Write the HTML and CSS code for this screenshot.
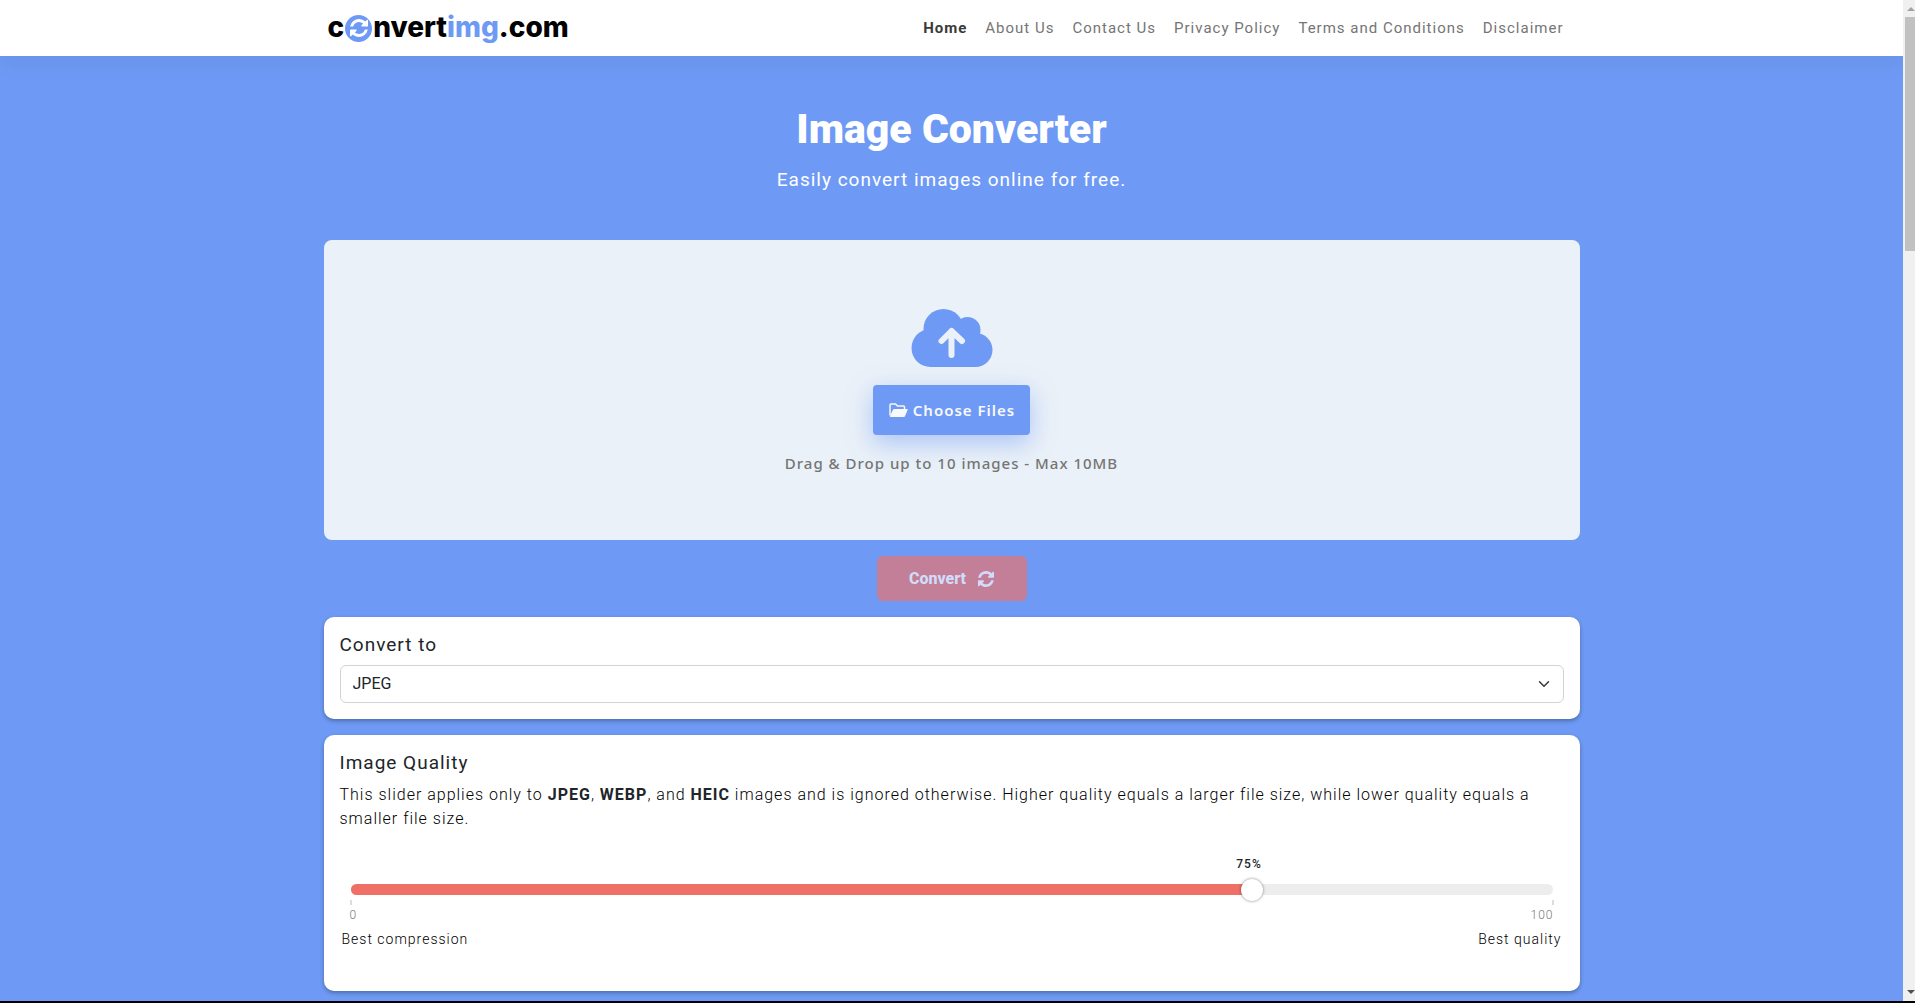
FILE: index.html
```html
<!DOCTYPE html>
<html lang="en">
<head>
  <meta charset="UTF-8">
  <meta name="viewport" content="width=device-width, initial-scale=1">
  <title>Image Converter - convertimg.com</title>
  <link rel="stylesheet" href="styles.css">
</head>
<body>
  <svg class="sprite" aria-hidden="true">
    <symbol id="refresh" viewBox="0 128 1536 1536">
      <path d="M1511 1056q0 5-1 7-64 268-268 434.500t-478 166.500q-146 0-282.500-55t-243.500-157l-129 129q-19 19-45 19t-45-19-19-45v-448q0-26 19-45t45-19h448q26 0 45 19t19 45-19 45l-137 137q71 66 161 102t187 36q134 0 250-65t186-179q11-17 53-117 8-23 30-23h192q13 0 22.500 9.500t9.500 22.500zm25-800v448q0 26-19 45t-45 19h-448q-26 0-45-19t-19-45 19-45l138-138q-148-137-349-137-134 0-250 65t-186 179q-11 17-53 117-8 23-30 23h-199q-13 0-22.500-9.500t-9.500-22.500v-7q65-268 270-434.500t480-166.500q146 0 284 55.500t245 156.500l130-129q19-19 45-19t45 19 19 45z"/>
    </symbol>
  </svg>

  <div class="page">
    <header class="header">
      <div class="container header-inner">
        <a class="logo" href="#" aria-label="convertimg.com">
          <span>c</span>
          <span class="logo-o"><svg><use href="#refresh"/></svg></span>
          <span>nvert<span class="logo-blue">img</span>.com</span>
        </a>
        <nav class="nav">
          <a class="active" href="#">Home</a>
          <a href="#">About Us</a>
          <a href="#">Contact Us</a>
          <a href="#">Privacy Policy</a>
          <a href="#">Terms and Conditions</a>
          <a href="#">Disclaimer</a>
        </nav>
      </div>
    </header>

    <main class="container">
      <h1>Image Converter</h1>
      <p class="subtitle">Easily convert images online for free.</p>

      <section class="dropzone">
        <svg class="cloud" viewBox="0 0 81 58" aria-hidden="true">
          <g fill="#6e9af5">
            <circle cx="32" cy="20" r="20"/>
            <circle cx="56" cy="21" r="13"/>
            <circle cx="19" cy="39" r="19"/>
            <circle cx="64" cy="41" r="17"/>
            <path d="M19 22h38v8h7v28H19z"/>
          </g>
          <path d="M40 22v24M30 32l10-10 10.500 10" fill="none" stroke="#eaf1f8" stroke-width="6" stroke-linecap="round" stroke-linejoin="round"/>
        </svg>
        <button type="button" class="btn-choose">
          <svg viewBox="0 0 19 15" aria-hidden="true">
            <path d="M1 12.500V2q0-1 1-1h4.500l2 2h6q1 0 1 1v2" fill="none" stroke="currentColor" stroke-width="1.500"/>
            <path d="M5.500 6H18q1 0 .6.900L16 13.200q-.4.800-1.300.8H1.500q-.9 0-.5-.9l3-6.300q.4-.8 1.500-.8z" fill="currentColor"/>
          </svg>
          Choose Files
        </button>
        <p class="hint">Drag &amp; Drop up to 10 images - Max 10MB</p>
      </section>

      <button type="button" class="btn-convert" disabled>
        Convert
        <svg><use href="#refresh"/></svg>
      </button>

      <section class="card">
        <label class="card-title" for="format">Convert to</label>
        <div class="select-wrap">
          <select id="format">
            <option>JPEG</option>
          </select>
          <svg viewBox="0 0 16 16" aria-hidden="true"><path d="m2 5 6 6 6-6" fill="none" stroke="#343a40" stroke-width="2" stroke-linecap="round" stroke-linejoin="round"/></svg>
        </div>
      </section>

      <section class="card">
        <label class="card-title" for="quality">Image Quality</label>
        <p class="desc">This slider applies only to <b>JPEG</b>, <b>WEBP</b>, and <b>HEIC</b> images and is ignored otherwise. Higher quality equals a larger file size, while lower quality equals a smaller file size.</p>
        <div class="slider">
          <output id="qualityValue" for="quality" style="left: 75%">75%</output>
          <div class="track">
            <div class="fill" id="fill" style="width: 75%"></div>
            <input type="range" id="quality" min="0" max="100" value="75">
          </div>
          <div class="scale"><span>0</span><span>100</span></div>
        </div>
        <div class="legend"><span>Best compression</span><span>Best quality</span></div>
      </section>
    </main>
  </div>

  <div class="scrollbar" aria-hidden="true">
    <i class="arrow up"></i>
    <div class="thumb"></div>
    <i class="arrow down"></i>
  </div>

  <script>
    const quality = document.getElementById('quality');
    const value = document.getElementById('qualityValue');
    const fill = document.getElementById('fill');

    quality.addEventListener('input', () => {
      value.textContent = quality.value + '%';
      value.style.left = quality.value + '%';
      fill.style.width = quality.value + '%';
    });
  </script>
</body>
</html>
```

FILE: styles.css
```css
* { box-sizing: border-box; }
body {
  margin: 0;
  min-height: 100vh;
  display: flex;
  background: #6e9af5;
  border-bottom: 2px solid #000;
  font-family: Roboto, "Liberation Sans", sans-serif;
  font-size: 16px;
  line-height: 24px;
  letter-spacing: 1px;
  color: #212529;
}
h1, p { margin: 0; }
button, select { font: inherit; }
.sprite { display: none; }
.page { flex: 1; min-width: 0; }
.container { width: 100%; max-width: 1256px; margin: 0 auto; }

/* header */
.header {
  background: #fff;
  box-shadow: 0 8px 24px rgba(0,0,0,0.05);
}
.header-inner {
  display: flex;
  justify-content: space-between;
  align-items: center;
  height: 56px;
  padding: 0 16px 0 4px;
}
.logo {
  display: flex;
  align-items: center;
  gap: 1px;
  font: 800 28px/30px Inter, sans-serif;
  letter-spacing: 0;
  color: #000;
  text-decoration: none;
}
.logo > span { padding-bottom: 2px; }
.logo .logo-o {
  display: flex;
  align-items: center;
  justify-content: center;
  width: 27px;
  height: 27px;
  padding: 0;
  border-radius: 50%;
  background: #6e9af5;
}
.logo-o svg { width: 20px; height: 18px; fill: #fff; }
.logo-blue { color: #6e9af5; }
.nav { display: flex; gap: 18px; font-size: 15px; }
.nav a { color: #757575; text-decoration: none; }
.nav a.active { color: #3a3a3a; font-weight: 700; }

/* hero */
h1 {
  padding-top: 49px;
  font-size: 41px;
  line-height: 48px;
  font-weight: 900;
  letter-spacing: 0;
  text-align: center;
  color: #fff;
}
.subtitle {
  padding: 11px 0 44px;
  font-size: 19px;
  line-height: 32px;
  text-align: center;
  color: #fff;
}
.dropzone {
  display: flex;
  flex-direction: column;
  align-items: center;
  justify-content: center;
  min-height: 300px;
  padding-top: 4px;
  border-radius: 8px;
  background: #eaf1f8;
  font-family: "Noto Sans", sans-serif;
}
.cloud { width: 82px; height: 58px; }
.btn-choose {
  display: flex;
  align-items: center;
  gap: 5px;
  height: 50px;
  margin: 18px 0 16px;
  padding: 0 15px 0 16px;
  border: 0;
  border-radius: 4px;
  background: #6e9af5;
  box-shadow: 0 8px 24px rgba(110,154,245,0.5);
  color: #f8f9fa;
  font-size: 15px;
  font-weight: 600;
  letter-spacing: 1px;
}
.btn-choose svg { width: 19px; height: 15px; }
.hint { color: #757575; font-size: 15px; font-weight: 500; }
.btn-convert {
  display: flex;
  align-items: center;
  justify-content: center;
  gap: 12px;
  width: 150px;
  height: 45px;
  margin: 16px auto;
  border: 0;
  border-radius: 6px;
  background: #c47f98;
  color: #d0dcfa;
  font-weight: 800;
}
.btn-convert svg { width: 16px; height: 16px; fill: currentColor; }

/* cards */
.card {
  margin-bottom: 16px;
  padding: 16px;
  border-radius: 10px;
  background: #fff;
  box-shadow: 0 2px 4px rgba(0,0,0,0.3);
}
.card:last-child { margin-bottom: 10px; padding-bottom: 40px; }
.card-title { display: block; margin-bottom: 8px; font-size: 19px; }
.select-wrap { position: relative; }
.select-wrap select {
  display: block;
  width: 100%;
  height: 38px;
  padding: 0 12px;
  border: 1px solid #ced4da;
  border-radius: 6px;
  background: #fff;
  color: #212529;
  appearance: none;
}
.select-wrap svg {
  position: absolute;
  right: 14px;
  top: 13px;
  width: 12px;
  height: 12px;
  pointer-events: none;
}
.desc { font-weight: 300; color: #000; }
.desc b { font-weight: 700; color: #212529; }

/* slider */
.slider { position: relative; margin: 53px 11px 0; }
.slider output {
  position: absolute;
  top: -28px;
  margin-left: -3px;
  transform: translateX(-50%);
  font-size: 12px;
  line-height: 16px;
  font-weight: 500;
}
.track { display: flex; align-items: center; position: relative; height: 11px; border-radius: 6px; background: #ededed; }
.fill { height: 11px; border-radius: 6px 0 0 6px; background: #ee7067; }
.track input {
  position: absolute;
  left: -11px;
  width: calc(100% + 22px);
  height: 22px;
  margin: 0;
  background: none;
  appearance: none;
}
.track input::-webkit-slider-thumb {
  appearance: none;
  width: 22px;
  height: 22px;
  border-radius: 50%;
  background: #fff;
  box-shadow: 0 0 3px rgba(0,0,0,0.5);
}
.scale {
  display: flex;
  justify-content: space-between;
  margin: 5px -1px 0;
  font-size: 12px;
  line-height: 16px;
  font-weight: 300;
  color: #777;
}
.scale span::before { content: ""; display: block; width: 2px; height: 5px; margin-bottom: 2px; background: #ddd; }
.scale span:last-child::before { margin-left: auto; }
.legend {
  display: flex;
  justify-content: space-between;
  margin-top: 4px;
  padding: 0 2px;
  font-size: 14px;
  font-weight: 300;
  color: #000;
}

/* scrollbar */
.scrollbar {
  display: flex;
  flex-direction: column;
  align-items: flex-end;
  width: 12px;
  background: #f0f0f0;
}
.scrollbar .thumb { width: 10px; height: 234px; margin: 6px 0 auto; background: #c1c1c1; }
.arrow { border: 4px solid transparent; }
.arrow.up { border-top: 0; margin-top: 7px; border-bottom-color: #a3a3a3; }
.arrow.down { border-bottom: 0; margin-bottom: 7px; border-top-color: #505050; }
```
